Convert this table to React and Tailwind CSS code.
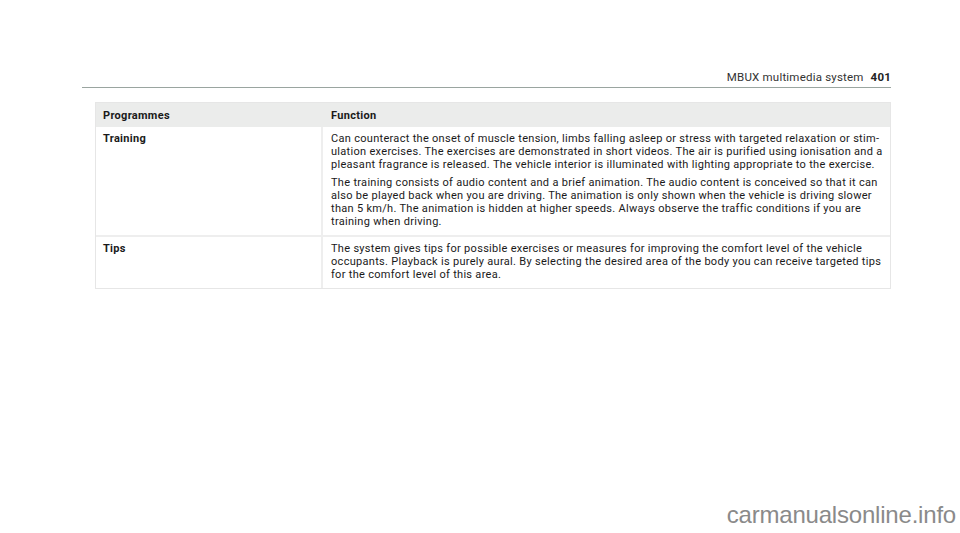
import React from 'react';

const rows = [
  {
    name: 'Training',
    lines: [
      ['Can counteract the onset of muscle tension, limbs falling asleep or stress with targeted relaxation or stim-', 'ulation exercises. The exercises are demonstrated in short videos. The air is purified using ionisation and a', 'pleasant fragrance is released. The vehicle interior is illuminated with lighting appropriate to the exercise.'],
      ['The training consists of audio content and a brief animation. The audio content is conceived so that it can', 'also be played back when you are driving. The animation is only shown when the vehicle is driving slower', 'than 5 km/h. The animation is hidden at higher speeds. Always observe the traffic conditions if you are', 'training when driving.'],
    ],
  },
  {
    name: 'Tips',
    lines: [
      ['The system gives tips for possible exercises or measures for improving the comfort level of the vehicle', 'occupants. Playback is purely aural. By selecting the desired area of the body you can receive targeted tips', 'for the comfort level of this area.'],
    ],
  },
];

export default function App() {
  return (
    <div className="relative w-[960px] h-[533px] bg-white overflow-hidden text-[#1a1a1a]" style={{ fontFamily: 'Roboto, "Liberation Sans", sans-serif' }}>
      {/* running header */}
      <div className="ml-[82px] w-[809px] h-[88px] flex justify-end items-end gap-[7px] pb-[3px] border-b border-[#9aa5a0] text-[11.5px] leading-[14px] tracking-[0.2px]">
        <span className="text-[#333]">MBUX multimedia system</span>
        <span className="font-bold text-[#222]">401</span>
      </div>

      {/* table */}
      <div className="ml-[95px] mt-[14px] w-[796px] border border-[#e6e6e6] text-[11px] leading-[13px] tracking-[0.3px]">
        <div className="flex h-[24px] items-center bg-[#ebeceb] font-bold">
          <div className="w-[227px] pl-[7px]">Programmes</div>
          <div className="flex-1 pl-[8px]">Function</div>
        </div>
        {rows.map((row, i) => (
          <div key={row.name} className={`flex ${i > 0 ? 'border-t-2 border-[#eeeeee]' : ''}`}>
            <div className="w-[227px] pl-[7px] pt-[5px] font-bold border-r-2 border-[#eeeeee]">{row.name}</div>
            <div className="flex-1 pl-[8px] pr-[6px] pt-[5px] pb-[7px] flex flex-col gap-[5px]">
              {row.lines.map((para, j) => (
                <div key={j}>
                  {para.map((l, k) => (
                    <div key={k} className="whitespace-nowrap">{l}</div>
                  ))}
                </div>
              ))}
            </div>
          </div>
        ))}
      </div>

      {/* watermark */}
      <div className="absolute right-[4px] bottom-[5px] text-[24px] leading-[26px] text-[#8a8a8a] tracking-[-0.2px]" style={{ fontFamily: '"Liberation Sans Narrow", "Liberation Sans", sans-serif' }}>
        carmanualsonline.info
      </div>
    </div>
  );
}
